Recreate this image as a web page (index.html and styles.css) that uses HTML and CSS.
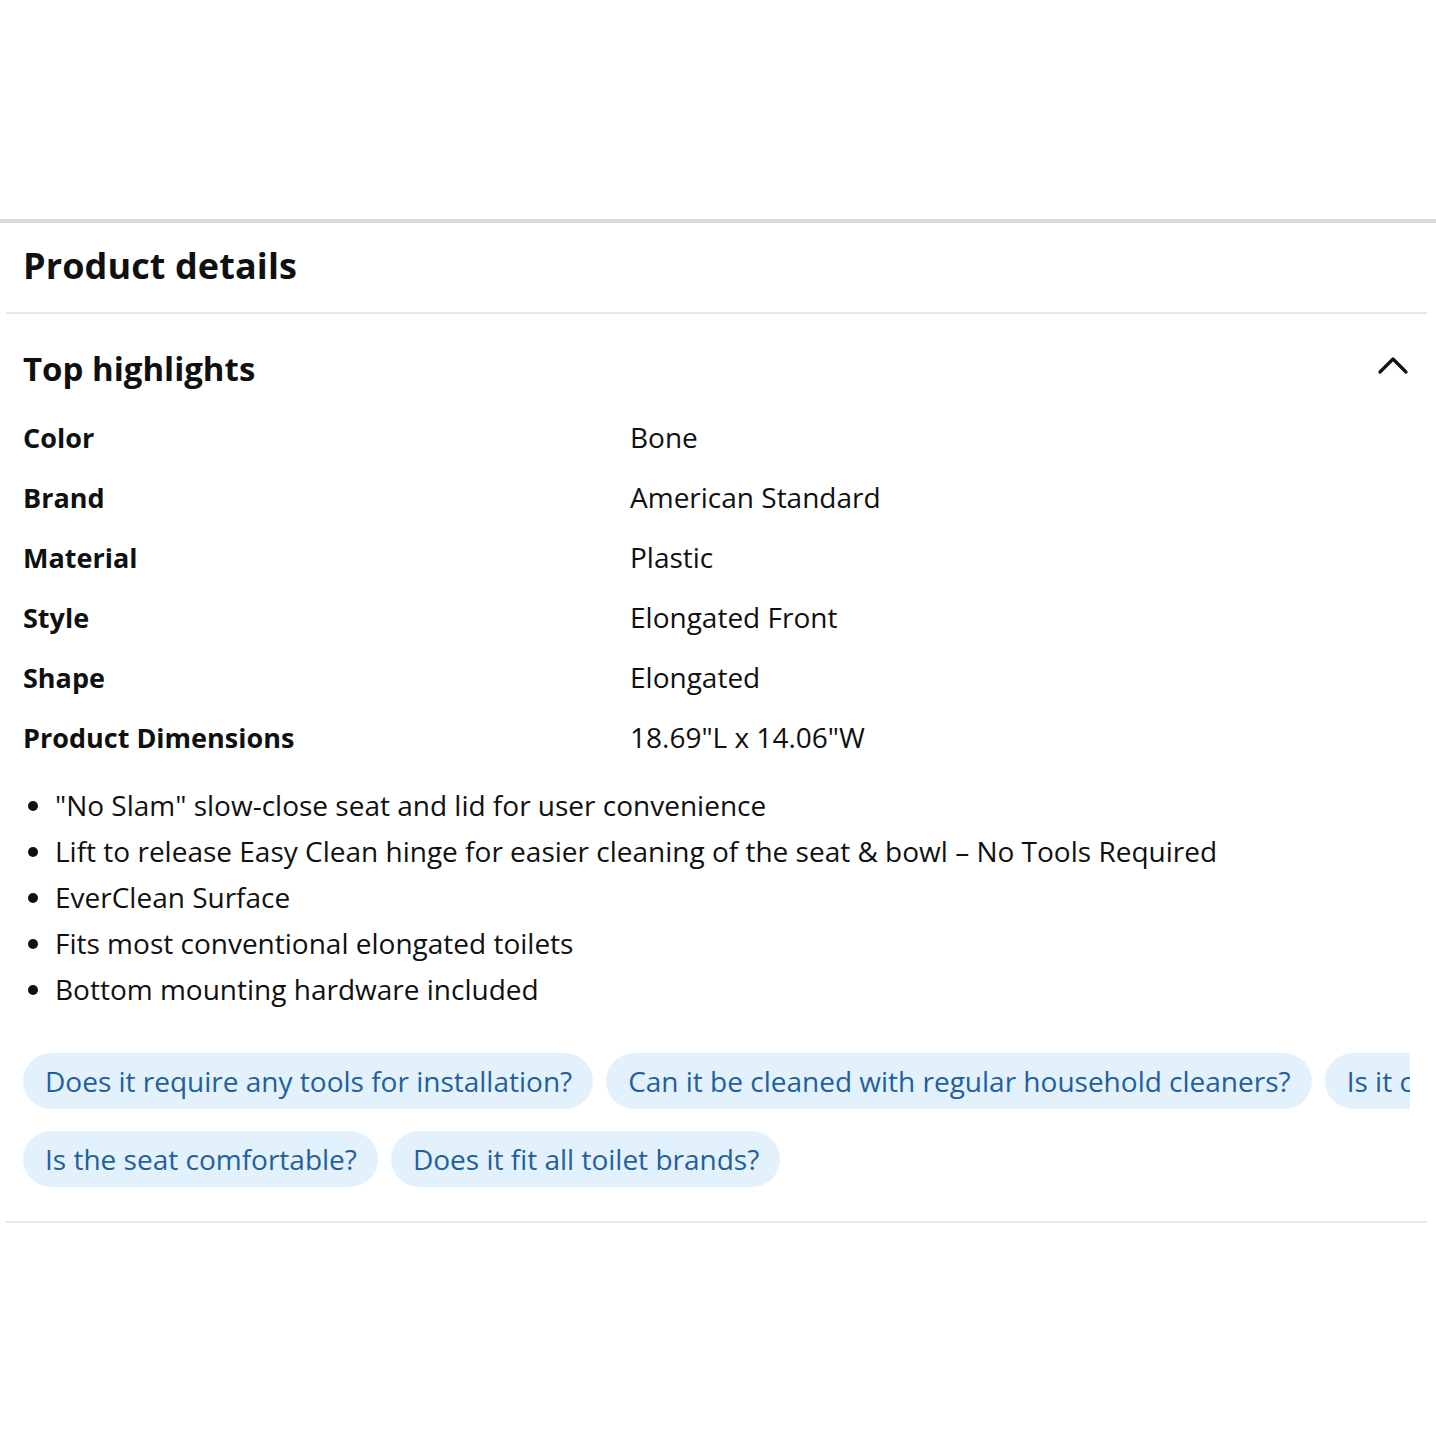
FILE: index.html
```html
<!DOCTYPE html>
<html>
<head>
<meta charset="utf-8">
<link rel="stylesheet" href="styles.css">
</head>
<body>
<div class="page">
  <div class="top-space"></div>
  <div class="thick-rule"></div>
  <h2 class="title">Product details</h2>
  <div class="rule"></div>
  <div class="section">
    <div class="section-head">
      <h3 class="subtitle">Top highlights</h3>
      <svg class="chev" width="32" height="20" viewBox="0 0 32 20"><path d="M3 17 L16 4 L29 17" fill="none" stroke="#111" stroke-width="3.2" stroke-linecap="round" stroke-linejoin="round"/></svg>
    </div>
    <div class="table">
      <div class="row"><div class="k">Color</div><div class="v">Bone</div></div>
      <div class="row"><div class="k">Brand</div><div class="v">American Standard</div></div>
      <div class="row"><div class="k">Material</div><div class="v">Plastic</div></div>
      <div class="row"><div class="k">Style</div><div class="v">Elongated Front</div></div>
      <div class="row"><div class="k">Shape</div><div class="v">Elongated</div></div>
      <div class="row"><div class="k">Product Dimensions</div><div class="v">18.69"L x 14.06"W</div></div>
    </div>
    <ul class="bullets">
      <li>"No Slam" slow-close seat and lid for user convenience</li>
      <li>Lift to release Easy Clean hinge for easier cleaning of the seat &amp; bowl – No Tools Required</li>
      <li>EverClean Surface</li>
      <li>Fits most conventional elongated toilets</li>
      <li>Bottom mounting hardware included</li>
    </ul>
    <div class="chips">
      <div class="chip-row">
        <span class="chip">Does it require any tools for installation?</span>
        <span class="chip">Can it be cleaned with regular household cleaners?</span>
        <span class="chip">Is it compatible with bidets?</span>
      </div>
      <div class="chip-row">
        <span class="chip">Is the seat comfortable?</span>
        <span class="chip">Does it fit all toilet brands?</span>
      </div>
    </div>
  </div>
  <div class="rule bottom"></div>
</div>
</body>
</html>
```
FILE: styles.css
```css
html, body {
  margin: 0;
  padding: 0;
  background: #fff;
}
body {
  font-family: "Open Sans", "Noto Sans", sans-serif;
  color: #0f1111;
}
.page {
  width: 1436px;
}
.top-space {
  height: 219px;
}
.thick-rule {
  height: 4px;
  background: #d5dbdb;
}
.title {
  margin: 0;
  padding: 20px 24px 0 23px;
  height: 70px;
  box-sizing: border-box;
  font-size: 36px;
  font-weight: 700;
  line-height: 46px;
  letter-spacing: 0.1px;
}
.rule {
  height: 2px;
  background: #e7e7e7;
  margin: 19px 9px 0 6px;
}
.section {
  padding: 0 26px 0 23px;
}
.section-head {
  display: flex;
  justify-content: space-between;
  align-items: center;
  height: 106px;
}
.subtitle {
  margin: 0;
  font-size: 33px;
  font-weight: 700;
  line-height: 40px;
  padding-top: 4px;
}
.chev {
  margin-right: 1px;
  margin-top: -4px;
}
.table {
  display: flex;
  flex-direction: column;
  margin-top: -13px;
}
.row {
  display: flex;
  height: 60px;
  align-items: center;
  font-size: 28px;
}
.k {
  width: 607px;
  font-weight: 700;
  font-size: 27px;
}
.v {
  font-weight: 400;
}
.bullets {
  margin: 15px 0 0 0;
  padding: 0 0 0 32px;
  font-size: 28px;
  line-height: 46px;
}
.chips {
  margin-top: 41px;
  width: 1387px;
  overflow: hidden;
  display: flex;
  flex-direction: column;
  gap: 22px;
}
.chip-row {
  display: flex;
  gap: 13px;
  white-space: nowrap;
}
.chip {
  flex: none;
  background: #e3f1fc;
  color: #22609c;
  font-size: 28px;
  height: 56px;
  line-height: 56px;
  padding: 0 21px 0 22px;
  border-radius: 28px;
}
.bottom {
  margin-top: 34px;
}
```
